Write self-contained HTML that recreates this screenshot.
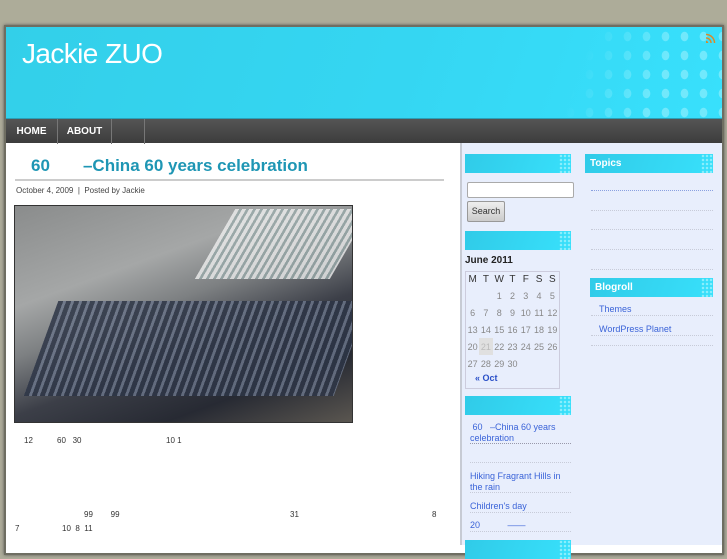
<!DOCTYPE html>
<html><head><meta charset="utf-8"><style>
*{margin:0;padding:0;box-sizing:border-box}
body{width:727px;height:545px;overflow:hidden;background:#adac99;font-family:"Liberation Sans","Noto Sans CJK SC",sans-serif;position:relative}
.a{position:absolute}
#page{left:4px;top:25px;width:720px;height:530px;background:#fff;border:2px solid #6f6e62;box-shadow:0 0 3px #555}
#hdr{left:6px;top:27px;width:716px;height:91px;background:linear-gradient(110deg,#33cfe9 0%,#35d6f2 55%,#38e0fc 100%);overflow:hidden}
#dots{position:absolute;right:0;top:0;width:180px;height:91px;opacity:.6;background:radial-gradient(ellipse 4px 5px,#9af0fd 90%,transparent 100%) 0 0/19px 19px;-webkit-mask-image:linear-gradient(110deg,transparent 25%,#000 65%);mask-image:linear-gradient(110deg,transparent 25%,#000 65%)}
#nav{left:6px;top:118px;width:716px;height:25px;background:linear-gradient(#555,#3c3c3c);border-top:1px solid #2aa0b8}
#nav span{position:absolute;top:0;height:25px;line-height:25px;color:#fff;font-size:10px;font-weight:bold;border-right:1px solid #777}
#side{left:460px;top:143px;width:262px;height:402px;background:#e8eefc;border-left:2px solid #c7cbd4}
.wh{position:absolute;height:19px;background:linear-gradient(110deg,#30cbe8,#38e0fb);color:#fff;font-size:10px;font-weight:bold;line-height:19px;padding-left:5px}
.wh:after{content:"";position:absolute;right:0;top:0;width:12px;height:19px;background:radial-gradient(circle,#8aeefc 1px,transparent 1.5px) 0 0/4px 4px}
.dl{position:absolute;border-top:1px dotted #c7cbd8;height:0}
.lk{position:absolute;color:#3a63d8;font-size:9px;line-height:11px}
.cal{font-size:9px;color:#888;text-align:center}
</style></head><body>
<div class="a" id="page"></div>
<div class="a" id="hdr">
<div id="dots"></div>
<div class="a" style="left:16px;top:11px;color:#fff;font-size:28px;letter-spacing:-0.6px">Jackie ZUO</div>
<div class="a" style="right:6px;top:6px;width:10px;height:10px;background:radial-gradient(circle at 0 100%,#d98a2a 2px,transparent 2.5px,transparent 4px,#d98a2a 4.5px,#d98a2a 5.5px,transparent 6px,transparent 7.5px,#d98a2a 8px,#d98a2a 9px,transparent 9.5px)"></div>
</div>
<div class="a" id="nav"><span style="left:0;width:52px;text-align:center">HOME</span><span style="left:52px;width:54px;text-align:center">ABOUT</span><span style="left:106px;width:33px"></span></div>
<div class="a" style="left:31px;top:156px;color:#1e96b4;font-size:17px;font-weight:bold">60 &nbsp; &nbsp; &nbsp; –China 60 years celebration</div>
<div class="a" style="left:15px;top:179px;width:429px;border-top:2px solid #ccc"></div>
<div class="a" style="left:16px;top:186px;font-size:8px;color:#444">October 4, 2009 &nbsp;| &nbsp;Posted by Jackie</div>
<div class="a" style="left:14px;top:205px;width:339px;height:218px;background:linear-gradient(160deg,#8a8c8c 0%,#a5a7a7 30%,#7d8082 45%,#3c3f48 62%,#272a33 80%,#5a5650 100%);border:1px solid #333;overflow:hidden">
<div class="a" style="left:200px;top:3px;width:135px;height:70px;background:repeating-linear-gradient(90deg,#eee 0 4px,#9aa 4px 7px);opacity:.8;transform:skewX(-30deg)"></div>
<div class="a" style="left:26px;top:95px;width:310px;height:95px;background:repeating-linear-gradient(90deg,#2d3546 0 5px,#6a7488 5px 8px);opacity:.85;transform:skewX(-20deg)"></div>
</div>
<div class="a" style="font-size:8px;color:#333;left:24px;top:436px">12</div>
<div class="a" style="font-size:8px;color:#333;left:57px;top:436px">60 &nbsp; 30</div>
<div class="a" style="font-size:8px;color:#333;left:166px;top:436px">10 1</div>
<div class="a" style="font-size:8px;color:#333;left:84px;top:510px">99 &nbsp; &nbsp; &nbsp; &nbsp;99</div>
<div class="a" style="font-size:8px;color:#333;left:290px;top:510px">31</div>
<div class="a" style="font-size:8px;color:#333;left:432px;top:510px">8</div>
<div class="a" style="font-size:8px;color:#333;left:15px;top:524px">7</div>
<div class="a" style="font-size:8px;color:#333;left:62px;top:524px">10 &nbsp;8 &nbsp;11</div>
<div class="a" id="side"></div>
<div class="wh" style="left:465px;top:154px;width:106px"></div>
<div class="wh" style="left:585px;top:154px;width:128px">Topics</div>
<div class="a" style="left:467px;top:182px;width:107px;height:16px;background:#fff;border:1px solid #aaa;border-radius:2px"></div>
<div class="a" style="left:467px;top:201px;width:38px;height:21px;background:linear-gradient(#eee,#ccc);border:1px solid #999;border-radius:2px;font-size:9px;line-height:19px;text-align:center;color:#333">Search</div>
<div class="wh" style="left:465px;top:231px;width:106px"></div>
<div class="a" style="left:465px;top:255px;font-size:10px;font-weight:bold;color:#222">June 2011</div>
<div class="a" style="left:465px;top:271px;width:95px;height:118px;border:1px solid #ccd"></div>
<table class="a cal" style="left:466px;top:272px;width:93px;border-collapse:collapse">
<tr style="color:#333;font-size:10px;height:15px"><td>M</td><td>T</td><td>W</td><td>T</td><td>F</td><td>S</td><td>S</td></tr>
<tr style="height:17px"><td></td><td></td><td>1</td><td>2</td><td>3</td><td>4</td><td>5</td></tr>
<tr style="height:17px"><td>6</td><td>7</td><td>8</td><td>9</td><td>10</td><td>11</td><td>12</td></tr>
<tr style="height:17px"><td>13</td><td>14</td><td>15</td><td>16</td><td>17</td><td>18</td><td>19</td></tr>
<tr style="height:17px"><td>20</td><td style="background:#e0e0e0;color:#bbb">21</td><td>22</td><td>23</td><td>24</td><td>25</td><td>26</td></tr>
<tr style="height:17px"><td>27</td><td>28</td><td>29</td><td>30</td><td></td><td></td><td></td></tr>
</table>
<div class="lk" style="left:475px;top:373px;font-weight:bold;color:#2a50c8">« Oct</div>
<div class="wh" style="left:465px;top:396px;width:106px"></div>
<div class="lk" style="left:470px;top:422px">&nbsp;60 &nbsp;&nbsp;–China 60 years<br>celebration</div>
<div class="dl" style="left:470px;top:443px;width:101px;border-top-color:#99a"></div>
<div class="dl" style="left:470px;top:462px;width:101px"></div>
<div class="lk" style="left:470px;top:471px">Hiking Fragrant Hills in<br>the rain</div>
<div class="dl" style="left:470px;top:492px;width:101px"></div>
<div class="lk" style="left:470px;top:501px">Children's day</div>
<div class="dl" style="left:470px;top:512px;width:101px"></div>
<div class="lk" style="left:470px;top:520px">20 &nbsp; &nbsp; &nbsp; &nbsp; &nbsp; ——</div>
<div class="dl" style="left:470px;top:531px;width:101px"></div>
<div class="wh" style="left:465px;top:540px;width:106px"></div>
<div class="dl" style="left:591px;top:190px;width:122px;border-top-color:#8aa0e0"></div>
<div class="dl" style="left:591px;top:210px;width:122px"></div>
<div class="dl" style="left:591px;top:229px;width:122px"></div>
<div class="dl" style="left:591px;top:249px;width:122px"></div>
<div class="dl" style="left:591px;top:269px;width:122px"></div>
<div class="wh" style="left:590px;top:278px;width:123px">Blogroll</div>
<div class="lk" style="left:599px;top:304px">Themes</div>
<div class="dl" style="left:591px;top:315px;width:122px"></div>
<div class="lk" style="left:599px;top:324px">WordPress Planet</div>
<div class="dl" style="left:591px;top:335px;width:122px"></div>
<div class="dl" style="left:591px;top:345px;width:122px"></div>
</body></html>
